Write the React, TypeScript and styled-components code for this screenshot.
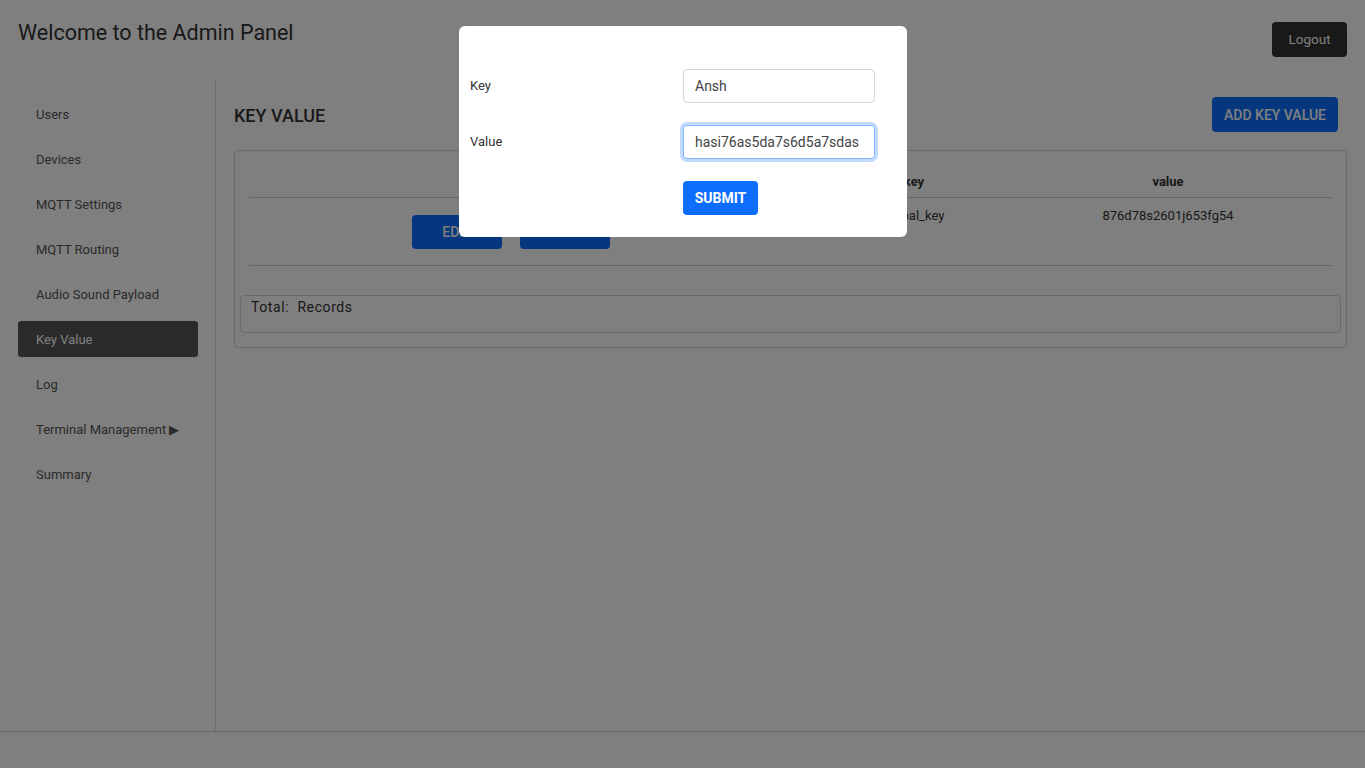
import * as React from 'react';
import styled, { createGlobalStyle, css } from 'styled-components';

const GlobalStyle = createGlobalStyle`
  html, body {
    margin: 0;
    padding: 0;
    background: #ffffff;
    font-family: Roboto, "Liberation Sans", sans-serif;
    color: #333;
  }
  * {
    box-sizing: border-box;
  }
`;

const Page = styled.div`
  display: flex;
  flex-direction: column;
  height: 100vh;
  overflow: hidden;
`;

const TopBar = styled.header`
  height: 80px;
  display: flex;
  justify-content: space-between;
  align-items: flex-start;
  padding: 19px 18px 0 18px;
`;

const Title = styled.h1`
  margin: 0;
  font-size: 21.5px;
  font-weight: 400;
  line-height: 27px;
  color: #333;
`;

const DarkButton = styled.button`
  margin-top: 3px;
  height: 35px;
  width: 75px;
  padding: 0 0 2px 0;
  background: #333;
  color: #fff;
  border: 0;
  border-radius: 4px;
  font-family: Roboto, "Liberation Sans", sans-serif;
  font-size: 13.5px;
`;

const Body = styled.div`
  flex: 1;
  display: flex;
  min-height: 0;
`;

const Sidebar = styled.nav`
  width: 216px;
  border-right: 1px solid #e2e2e2;
  padding: 16px 0 0 18px;
  display: flex;
  flex-direction: column;
  gap: 9px;
`;

const NavItem = styled.div<{ active?: boolean }>`
  width: 180px;
  height: 36px;
  display: flex;
  align-items: center;
  padding-left: 18px;
  border-radius: 3px;
  font-size: 13px;
  color: #555;
  ${(p) => p.active && css`
    background: #555;
    color: #fff;
  `}
`;

const Main = styled.main`
  flex: 1;
  padding: 17px 18px 0 18px;
`;

const MainHead = styled.div`
  display: flex;
  justify-content: space-between;
  align-items: center;
  height: 35px;
  padding-right: 9px;
`;

const SectionTitle = styled.h2`
  margin: 2px 0 0 0;
  font-size: 18px;
  font-weight: 500;
  color: #333;
`;

const PrimaryButton = styled.button<{ w?: number; h?: number; strong?: boolean }>`
  height: ${(p) => p.h ?? 35}px;
  padding: 0 12px;
  min-width: ${(p) => (p.w ? `${p.w}px` : 'auto')};
  background: #0d6efd;
  color: #fff;
  border: 0;
  border-radius: 4px;
  font-family: Roboto, "Liberation Sans", sans-serif;
  font-size: 14px;
  font-weight: ${(p) => (p.strong ? 700 : 500)};
  text-transform: uppercase;
`;

const Card = styled.section`
  margin-top: 18px;
  border: 1px solid #d4d4d4;
  border-radius: 4px;
  padding: 14px 5px 14px 5px;
`;

const Table = styled.div`
  margin: 0 9px;
`;

const Row = styled.div<{ head?: boolean }>`
  display: grid;
  grid-template-columns: 526px 278px 230px 1fr;
  border-bottom: 1px solid #cfcfcf;
  ${(p) => p.head ? css`
    height: 33px;
    align-items: center;
    font-weight: 700;
  ` : css`
    height: 68px;
    padding-top: 10px;
  `}
`;

const Cell = styled.div`
  text-align: center;
  font-size: 13px;
  color: #333;
`;

const Actions = styled.div`
  display: flex;
  justify-content: center;
  gap: 18px;
  padding-top: 7px;
  padding-right: 2px;
`;

const TotalBox = styled.div`
  margin-top: 29px;
  height: 38px;
  border: 1px solid #d4d4d4;
  border-radius: 4px;
  padding: 3px 10px;
  font-size: 14px;
  letter-spacing: 0.6px;
  color: #333;
  white-space: pre;
`;

const Footer = styled.footer`
  height: 37px;
  border-top: 1px solid #cfcfcf;
  background: #fff;
`;

const Backdrop = styled.div`
  position: fixed;
  inset: 0;
  background: rgba(0, 0, 0, 0.5);
`;

const Modal = styled.div`
  position: fixed;
  top: 26px;
  left: 459px;
  width: 448px;
  background: #fff;
  border-radius: 6px;
  padding: 43px 11px 22px 11px;
  display: grid;
  grid-template-columns: 213px 192px;
  row-gap: 22px;
  align-items: center;
`;

const Label = styled.label`
  font-size: 13px;
  color: #333;
  margin-top: -2px;
`;

const Input = styled.input<{ focused?: boolean }>`
  width: 192px;
  height: 34px;
  padding: 0 11px;
  border: 1px solid #d6d6d6;
  border-radius: 4px;
  font-family: Roboto, "Liberation Sans", sans-serif;
  font-size: 14px;
  color: #444;
  outline: none;
  ${(p) => p.focused && css`
    border-color: #86b7fe;
    box-shadow: 0 0 0 3px rgba(13, 110, 253, 0.25);
  `}
`;

const SubmitButton = styled(PrimaryButton)`
  width: 75px;
  padding: 0;
`;

const navItems = [
  'Users',
  'Devices',
  'MQTT Settings',
  'MQTT Routing',
  'Audio Sound Payload',
  'Key Value',
  'Log',
  'Terminal Management ▶',
  'Summary',
];

export default function App() {
  return <>
    <GlobalStyle />
    <Page>
      <TopBar>
        <Title>Welcome to the Admin Panel</Title>
        <DarkButton>Logout</DarkButton>
      </TopBar>
      <Body>
        <Sidebar>
          {navItems.map((item) => (
            <NavItem key={item} active={item === 'Key Value'}>{item}</NavItem>
          ))}
        </Sidebar>
        <Main>
          <MainHead>
            <SectionTitle>KEY VALUE</SectionTitle>
            <PrimaryButton>Add Key Value</PrimaryButton>
          </MainHead>
          <Card>
            <Table>
              <Row head>
                <Cell></Cell>
                <Cell>key</Cell>
                <Cell>value</Cell>
                <Cell></Cell>
              </Row>
              <Row>
                <Actions>
                  <PrimaryButton w={90} h={34}>Edit</PrimaryButton>
                  <PrimaryButton w={90} h={34}>Delete</PrimaryButton>
                </Actions>
                <Cell>global_key</Cell>
                <Cell>876d78s2601j653fg54</Cell>
                <Cell></Cell>
              </Row>
            </Table>
            <TotalBox>{'Total:  Records'}</TotalBox>
          </Card>
        </Main>
      </Body>
      <Footer />
    </Page>
    <Backdrop />
    <Modal>
      <Label>Key</Label>
      <Input defaultValue="Ansh" />
      <Label>Value</Label>
      <Input focused defaultValue="hasi76as5da7s6d5a7sdas" />
      <div />
      <SubmitButton strong h={34}>Submit</SubmitButton>
    </Modal>
  </>;
}
